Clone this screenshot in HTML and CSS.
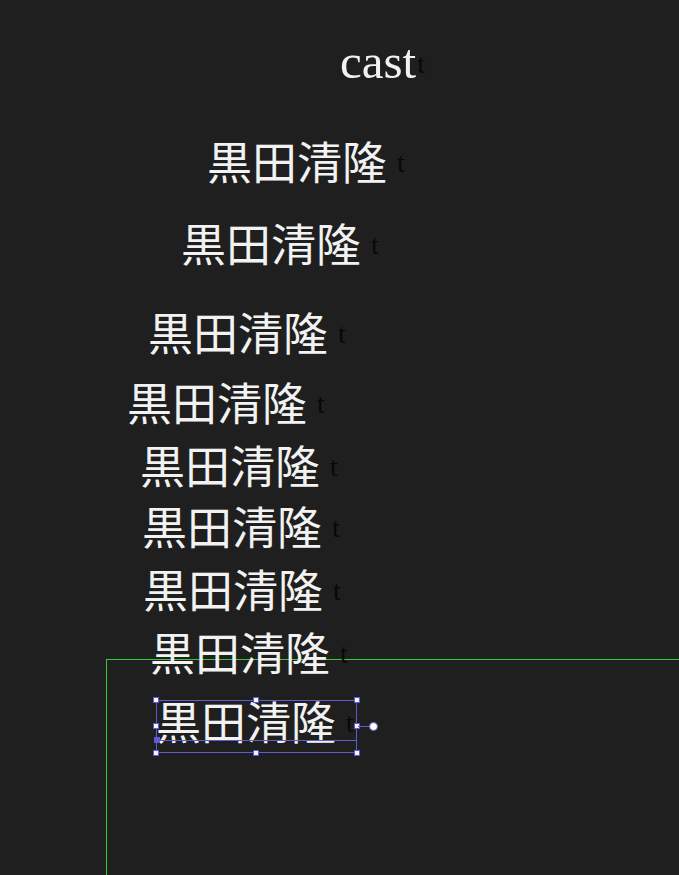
FILE: index.html
```html
<!DOCTYPE html>
<html lang="ja">
<head>
<meta charset="utf-8">
<title>cast</title>
<link rel="stylesheet" href="styles.css">
</head>
<body>
<div class="canvas">
  <div class="frame"></div>

  <div class="item latin" style="left:340px;top:37px"><span class="label">cast</span><span class="tag">t</span></div>
  <div class="item" style="left:207px;top:143px"><span class="label">黒田清隆</span><span class="tag">t</span></div>
  <div class="item" style="left:181px;top:225px"><span class="label">黒田清隆</span><span class="tag">t</span></div>
  <div class="item" style="left:148px;top:314px"><span class="label">黒田清隆</span><span class="tag">t</span></div>
  <div class="item" style="left:127px;top:384px"><span class="label">黒田清隆</span><span class="tag">t</span></div>
  <div class="item" style="left:140px;top:447px"><span class="label">黒田清隆</span><span class="tag">t</span></div>
  <div class="item" style="left:142px;top:508px"><span class="label">黒田清隆</span><span class="tag">t</span></div>
  <div class="item" style="left:143px;top:571px"><span class="label">黒田清隆</span><span class="tag">t</span></div>
  <div class="item" style="left:150px;top:634px"><span class="label">黒田清隆</span><span class="tag">t</span></div>
  <div class="item" style="left:156px;top:703px"><span class="label">黒田清隆</span><span class="tag">t</span></div>

  <div class="selection">
    <div class="baseline"><span class="anchor"></span></div>
    <span class="handle h-tl"></span>
    <span class="handle h-tc"></span>
    <span class="handle h-tr"></span>
    <span class="handle h-ml"></span>
    <span class="handle h-mr"></span>
    <span class="handle h-bl"></span>
    <span class="handle h-bc"></span>
    <span class="handle h-br"></span>
    <span class="stem"></span>
    <span class="knob"></span>
  </div>
</div>
</body>
</html>
```

FILE: styles.css
```css
html, body {
  margin: 0;
  padding: 0;
  background: #1f1f1f;
}

.canvas {
  position: relative;
  width: 679px;
  height: 875px;
  overflow: hidden;
  background: #1f1f1f;
}

.frame {
  position: absolute;
  left: 106px;
  top: 659px;
  right: -10px;
  bottom: -10px;
  border-top: 1px solid #33cc33;
  border-left: 1px solid #33cc33;
}

.item {
  position: absolute;
  white-space: nowrap;
  line-height: 1;
}

.label {
  font-family: "Liberation Serif", "Noto Sans CJK JP", serif;
  font-size: 45px;
  line-height: 1;
  color: #f2f2f2;
}

.latin .label {
  font-size: 49px;
}

.tag {
  font-family: "Liberation Serif", serif;
  font-size: 28px;
  line-height: 1;
  color: #080808;
  margin-left: 10px;
  vertical-align: 8px;
}

.latin .tag {
  margin-left: 1px;
  vertical-align: 5px;
}

.selection {
  position: absolute;
  left: 156px;
  top: 700px;
  width: 199px;
  height: 51px;
  border: 1px solid #5c5cd0;
}

.baseline {
  position: absolute;
  left: 0;
  right: 0;
  top: 39px;
  border-top: 1px solid #5c5cd0;
}

.anchor {
  position: absolute;
  left: -3px;
  top: -4px;
  width: 6px;
  height: 6px;
  background: #5c5cd0;
}

.handle {
  position: absolute;
  width: 4px;
  height: 4px;
  background: #f4f4ff;
  border: 1px solid #5c5cd0;
}

.h-tl { left: -4px; top: -4px; }
.h-tc { left: 96px; top: -4px; }
.h-tr { right: -4px; top: -4px; }
.h-ml { left: -4px; top: 22px; }
.h-mr { right: -4px; top: 22px; }
.h-bl { left: -4px; bottom: -4px; }
.h-bc { left: 96px; bottom: -4px; }
.h-br { right: -4px; bottom: -4px; }

.stem {
  position: absolute;
  left: 201px;
  top: 25px;
  width: 12px;
  border-top: 1px solid #5c5cd0;
}

.knob {
  position: absolute;
  left: 212px;
  top: 21px;
  width: 7px;
  height: 7px;
  border-radius: 50%;
  background: #ffffff;
  border: 1px solid #5c5cd0;
}
```
